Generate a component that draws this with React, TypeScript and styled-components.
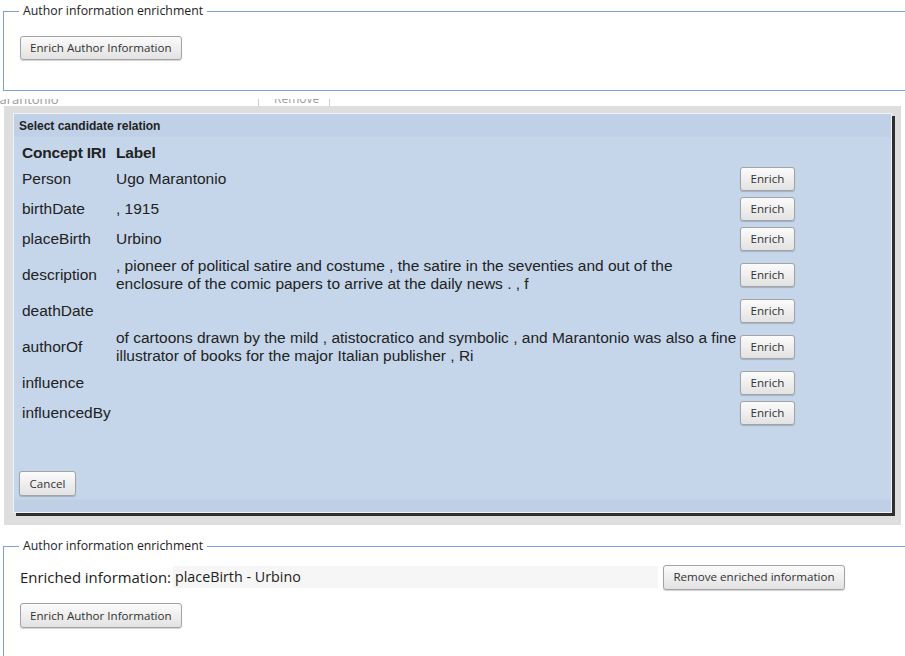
import React from "react";
import styled, { createGlobalStyle } from "styled-components";

const Global = createGlobalStyle`
  html, body {
    margin: 0;
    padding: 0;
    background: #ffffff;
    overflow: hidden;
  }
  body {
    font-family: "Open Sans", "Noto Sans", sans-serif;
    color: #333;
  }
`;

const Page = styled.div`
  width: 905px;
  height: 656px;
  overflow: hidden;
  padding-top: 4px;
  box-sizing: border-box;
`;

const Fieldset = styled.fieldset<{ $height: number; $top?: number }>`
  margin: ${(p) => p.$top ?? 0}px 0 0 3px;
  width: 960px;
  height: ${(p) => p.$height}px;
  box-sizing: border-box;
  border: 1px solid #7e9dd4;
  border-right: none;
  padding: 4px 15px 0 16px;
  min-width: 0;
`;

const Legend = styled.legend`
  font-family: "Open Sans", "Noto Sans", sans-serif;
  font-size: 12.3px;
  color: #222;
  padding: 0 4px 0 4px;
  margin-left: -1px;
  line-height: 14px;
`;

const Button = styled.button<{ $w?: number; $h?: number }>`
  font-family: "Open Sans", "Noto Sans", sans-serif;
  font-size: 11.6px;
  color: #333;
  width: ${(p) => (p.$w ? `${p.$w}px` : "auto")};
  height: ${(p) => p.$h ?? 24}px;
  padding: 0 9px;
  border: 1px solid #a3a3a3;
  border-radius: 3px;
  background: linear-gradient(#fbfbfb, #e2e2e2);
  box-shadow: 0 1px 1px rgba(0, 0, 0, 0.18);
  cursor: pointer;
  white-space: nowrap;
  line-height: 1;
`;

const ButtonRow = styled.div<{ $top: number }>`
  display: flex;
  margin-top: ${(p) => p.$top}px;
`;

/* sliver of the page beneath the modal overlay */
const Peek = styled.div`
  height: 7px;
  margin-top: 8px;
  overflow: hidden;
  color: #9a9a9a;
`;

const PeekRow = styled.div`
  display: flex;
  align-items: center;
  margin: -9px 0 0 -40px;
  height: 18px;
`;

const PeekName = styled.span`
  font-size: 13px;
  width: 298px;
`;

const PeekButton = styled.span`
  font-size: 12px;
  border-left: 1px solid #ccc;
  border-right: 1px solid #ccc;
  padding: 0 10px 0 15px;
  height: 18px;
  line-height: 18px;
`;

const Overlay = styled.div`
  margin-left: 4px;
  width: 897px;
  height: 419px;
  background: #dedede;
  padding: 7px 0 0 9px;
  box-sizing: border-box;
`;

const Dialog = styled.div`
  width: 879px;
  height: 400px;
  box-sizing: border-box;
  background: #c5d6eb;
  border: 1px solid #eef2f8;
  box-shadow: 3px 3px 0 #2f2f2f;
  display: flex;
  flex-direction: column;
`;

const TitleBar = styled.div`
  height: 23px;
  background: #bfd0e7;
  display: flex;
  align-items: center;
  padding-left: 5px;
  font-family: "Liberation Sans", Arial, sans-serif;
  font-weight: bold;
  font-size: 12px;
  color: #222;
`;

const Body = styled.div`
  flex: 1;
  padding: 4px 0 0 5px;
`;

const Table = styled.table`
  border-collapse: separate;
  border-spacing: 0;
  table-layout: fixed;
  width: 782px;
  font-family: "Liberation Sans", Arial, sans-serif;
  font-size: 15.5px;
  color: #222;
`;

const Th = styled.th<{ $w: number }>`
  width: ${(p) => p.$w}px;
  text-align: left;
  font-weight: bold;
  letter-spacing: -0.2px;
  padding: 3px 3px 2px 3px;
  line-height: 18px;
  height: 18px;
`;

const Td = styled.td<{ $tall: boolean; $padLeft?: number; $padRight?: number }>`
  padding: 3px ${(p) => p.$padRight ?? 3}px 3px ${(p) => p.$padLeft ?? 3}px;
  line-height: 18px;
  height: ${(p) => (p.$tall ? 36 : 24)}px;
  vertical-align: middle;
`;

const Footer = styled.div`
  height: 50px;
  box-sizing: border-box;
  padding: 9px 0 0 5px;
  background: linear-gradient(#c5d6eb 0, #c5d6eb 37px, #bfd0e6 38px, #bfd0e6 100%);
`;

const InfoRow = styled.div`
  display: flex;
  align-items: center;
  margin-top: 8px;
  height: 24px;
`;

const InfoLabel = styled.span`
  font-size: 14.9px;
  color: #222;
  width: 153px;
  white-space: nowrap;
`;

const InfoValue = styled.div`
  width: 483px;
  height: 22px;
  background: #f6f6f6;
  font-size: 14.3px;
  color: #222;
  line-height: 22px;
  padding-left: 2px;
  margin-right: 5px;
`;

type Row = { iri: string; label: string; tall?: boolean };

const rows: Row[] = [
  { iri: "Person", label: "Ugo Marantonio" },
  { iri: "birthDate", label: ", 1915" },
  { iri: "placeBirth", label: "Urbino" },
  {
    iri: "description",
    label:
      ", pioneer of political satire and costume , the satire in the seventies and out of the enclosure of the comic papers to arrive at the daily news . , f",
    tall: true,
  },
  { iri: "deathDate", label: "" },
  {
    iri: "authorOf",
    label:
      "of cartoons drawn by the mild , atistocratico and symbolic , and Marantonio was also a fine illustrator of books for the major Italian publisher , Ri",
    tall: true,
  },
  { iri: "influence", label: "" },
  { iri: "influencedBy", label: "" },
];

export default function App() {
  return (
    <Page>
      <Global />
      <Fieldset $height={87}>
        <Legend>Author information enrichment</Legend>
        <ButtonRow $top={14}>
          <Button $h={24}>Enrich Author Information</Button>
        </ButtonRow>
      </Fieldset>

      <Peek>
        <PeekRow>
          <PeekName>Ugo Marantonio</PeekName>
          <PeekButton>Remove</PeekButton>
        </PeekRow>
      </Peek>

      <Overlay>
        <Dialog>
          <TitleBar>Select candidate relation</TitleBar>
          <Body>
            <Table>
              <thead>
                <tr>
                  <Th $w={88}>Concept IRI</Th>
                  <Th $w={620}>Label</Th>
                  <Th $w={56}></Th>
                </tr>
              </thead>
              <tbody>
                {rows.map((r) => (
                  <tr key={r.iri}>
                    <Td $tall={!!r.tall}>{r.iri}</Td>
                    <Td $tall={!!r.tall} $padRight={1}>
                      {r.label}
                    </Td>
                    <Td $tall={!!r.tall} $padLeft={1}>
                      <Button $w={55} $h={24}>
                        Enrich
                      </Button>
                    </Td>
                  </tr>
                ))}
              </tbody>
            </Table>
          </Body>
          <Footer>
            <Button $w={57} $h={25}>
              Cancel
            </Button>
          </Footer>
        </Dialog>
      </Overlay>

      <Fieldset $height={140} $top={14}>
        <Legend>Author information enrichment</Legend>
        <InfoRow>
          <InfoLabel>Enriched information:</InfoLabel>
          <InfoValue>placeBirth - Urbino</InfoValue>
          <Button $w={182} $h={25}>
            Remove enriched information
          </Button>
        </InfoRow>
        <ButtonRow $top={14}>
          <Button $h={25}>Enrich Author Information</Button>
        </ButtonRow>
      </Fieldset>
    </Page>
  );
}
